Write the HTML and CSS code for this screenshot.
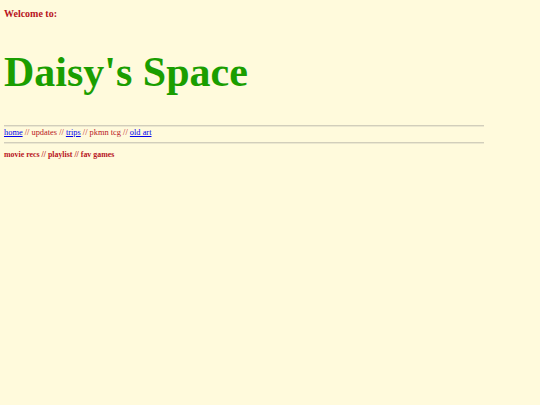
FILE: index.html
```html
<!DOCTYPE html>
<html>
<head>
<meta charset="utf-8">
<link rel="stylesheet" href="styles.css">
</head>
<body>
<div class="page">
  <p class="welcome">Welcome to:</p>
  <h1 class="title">Daisy's Space</h1>
  <hr class="rule">
  <nav class="nav"><a href="#">home</a> // updates // <a href="#">trips</a> // pkmn tcg // <a href="#">old art</a></nav>
  <hr class="rule rule-second">
  <p class="sub">movie recs // playlist // fav games</p>
</div>
</body>
</html>
```
FILE: styles.css
```css
html, body {
  margin: 0;
  padding: 0;
  background: #fffadc;
}
body {
  font-family: "Liberation Serif", "Times New Roman", serif;
  color: #b8141c;
}
.page {
  padding: 0 4px;
  width: 480px;
}
.welcome {
  margin: 0;
  padding-top: 8px;
  font-size: 10px;
  line-height: 12px;
  font-weight: bold;
}
.title {
  margin: 28px 0 0;
  font-size: 42px;
  line-height: 48px;
  font-weight: bold;
  color: #1a9e00;
}
.rule {
  margin: 29px 0 0;
  border: none;
  border-top: 1px solid #d2cebb;
  border-bottom: 1px solid #ebe7cf;
  height: 0;
}
.nav {
  margin: 0;
  font-size: 8.4px;
  line-height: 12px;
}
.rule-second { margin-top: 3px; }
.nav a { color: #0000ee; }
.sub {
  margin: 6px 0 0;
  font-size: 7.9px;
  line-height: 10px;
  font-weight: bold;
}
```
